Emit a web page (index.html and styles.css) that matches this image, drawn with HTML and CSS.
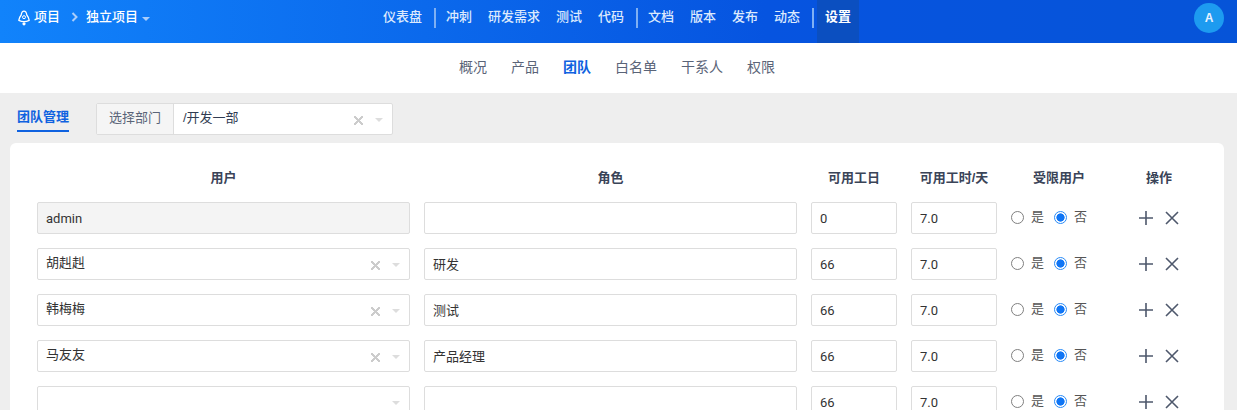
FILE: index.html
```html
<!DOCTYPE html>
<html lang="zh-CN">
<head>
<meta charset="utf-8">
<title>团队</title>
<link rel="stylesheet" href="styles.css">
</head>
<body>
<header class="topbar">
  <div class="crumbs">
    <svg class="logo" width="14" height="16" viewBox="0 0 14 16"><path d="M7 1.2C8.6 1.2 9.5 3 9.8 5 11 6.5 12 8 12.2 10.4 9 12 5 12 1.8 10.4 2 8 3 6.5 4.2 5 4.5 3 5.4 1.2 7 1.2Z" fill="none" stroke="#fff" stroke-width="1.3" stroke-linejoin="round"/><circle cx="7" cy="7.2" r="1.5" fill="none" stroke="#fff" stroke-width="1"/><circle cx="7" cy="13.8" r="1.6" fill="#fff"/></svg>
    <span class="crumb">项目</span>
    <svg class="chev" width="8" height="10" viewBox="0 0 8 10"><path d="M1.5 1 5.5 5 1.5 9" fill="none" stroke="#a9cdfb" stroke-width="2"/></svg>
    <span class="crumb">独立项目</span>
    <span class="caret"></span>
  </div>
  <nav class="mainnav">
    <a class="nav">仪表盘</a><i class="sep"></i>
    <a class="nav">冲刺</a><a class="nav">研发需求</a><a class="nav">测试</a><a class="nav">代码</a><i class="sep"></i>
    <a class="nav">文档</a><a class="nav">版本</a><a class="nav">发布</a><a class="nav">动态</a><i class="sep"></i>
    <a class="nav active">设置</a>
  </nav>
  <div class="avatar">A</div>
</header>
<nav class="subnav">
  <a>概况</a><a>产品</a><a class="on">团队</a><a>白名单</a><a>干系人</a><a>权限</a>
</nav>
<main class="content">
  <div class="toolbar">
    <div class="tab">团队管理</div>
    <div class="dept">
      <div class="addon">选择部门</div>
      <div class="dept-value"><span class="grow">/开发一部</span><span class="clear"></span><span class="arrow"></span></div>
    </div>
  </div>
  <section class="card">
    <div class="grid head">
      <div>用户</div><div>角色</div><div>可用工日</div><div>可用工时/天</div><div>受限用户</div><div>操作</div>
    </div>
    <div class="grid row">
      <div class="field disabled latin">admin</div>
      <div class="field"></div>
      <div class="field latin">0</div>
      <div class="field latin">7.0</div>
      <div class="radios"><span class="radio"></span><span class="rl">是</span><span class="radio checked"></span><span class="rl">否</span></div>
      <div class="ops"><svg width="16" height="16" viewBox="0 0 16 16"><path d="M8 1v14M1 8h14" class="op"/></svg><svg width="16" height="16" viewBox="0 0 16 16"><path d="M2 2l12 12M14 2 2 14" class="op"/></svg></div>
    </div>
    <div class="grid row">
      <div class="field sel"><span class="grow up">胡赳赳</span><span class="clear"></span><span class="arrow"></span></div>
      <div class="field low">研发</div>
      <div class="field latin">66</div>
      <div class="field latin">7.0</div>
      <div class="radios"><span class="radio"></span><span class="rl">是</span><span class="radio checked"></span><span class="rl">否</span></div>
      <div class="ops"><svg width="16" height="16" viewBox="0 0 16 16"><path d="M8 1v14M1 8h14" class="op"/></svg><svg width="16" height="16" viewBox="0 0 16 16"><path d="M2 2l12 12M14 2 2 14" class="op"/></svg></div>
    </div>
    <div class="grid row">
      <div class="field sel"><span class="grow up">韩梅梅</span><span class="clear"></span><span class="arrow"></span></div>
      <div class="field low">测试</div>
      <div class="field latin">66</div>
      <div class="field latin">7.0</div>
      <div class="radios"><span class="radio"></span><span class="rl">是</span><span class="radio checked"></span><span class="rl">否</span></div>
      <div class="ops"><svg width="16" height="16" viewBox="0 0 16 16"><path d="M8 1v14M1 8h14" class="op"/></svg><svg width="16" height="16" viewBox="0 0 16 16"><path d="M2 2l12 12M14 2 2 14" class="op"/></svg></div>
    </div>
    <div class="grid row">
      <div class="field sel"><span class="grow up">马友友</span><span class="clear"></span><span class="arrow"></span></div>
      <div class="field low">产品经理</div>
      <div class="field latin">66</div>
      <div class="field latin">7.0</div>
      <div class="radios"><span class="radio"></span><span class="rl">是</span><span class="radio checked"></span><span class="rl">否</span></div>
      <div class="ops"><svg width="16" height="16" viewBox="0 0 16 16"><path d="M8 1v14M1 8h14" class="op"/></svg><svg width="16" height="16" viewBox="0 0 16 16"><path d="M2 2l12 12M14 2 2 14" class="op"/></svg></div>
    </div>
    <div class="grid row">
      <div class="field sel"><span class="grow"></span><span class="arrow"></span></div>
      <div class="field"></div>
      <div class="field latin">66</div>
      <div class="field latin">7.0</div>
      <div class="radios"><span class="radio"></span><span class="rl">是</span><span class="radio checked"></span><span class="rl">否</span></div>
      <div class="ops"><svg width="16" height="16" viewBox="0 0 16 16"><path d="M8 1v14M1 8h14" class="op"/></svg><svg width="16" height="16" viewBox="0 0 16 16"><path d="M2 2l12 12M14 2 2 14" class="op"/></svg></div>
    </div>
  </section>
</main>
</body>
</html>
```
FILE: styles.css
```css
* { box-sizing: border-box; }
html, body { margin: 0; height: 410px; overflow: hidden; }
body {
  background: #eee;
  color: #313c52;
  font-family: "Liberation Sans", "Noto Sans CJK SC", sans-serif;
  font-size: 13px;
  line-height: 20px;
}
.topbar {
  height: 43px;
  display: grid;
  grid-template-columns: 1fr auto 1fr;
  align-items: center;
  padding: 0 13px 0 18px;
  background: linear-gradient(90deg, #1183fb, #0654e0 62%, #0654d8);
  color: #fff;
}
.crumbs { display: flex; align-items: center; margin-bottom: 9px; margin-left: -1px; }
.logo { margin-right: 3px; margin-top: 1px; }
.crumb { font-weight: 500; }
.chev { margin: 0 7px 0 11px; }
.caret {
  margin: 3px 0 0 4px;
  border: 4px solid transparent;
  border-top: 4px solid #a9cdfb;
  border-bottom: 0;
  width: 0;
}
.mainnav { display: flex; align-items: stretch; height: 43px; }
.nav {
  display: flex;
  align-items: center;
  padding-bottom: 9px;
  margin-right: 16px;
  color: #dce9fd;
  font-weight: 500;
}
.nav + .sep { margin-left: -4px; }
.sep {
  width: 2px;
  height: 20px;
  align-self: flex-start;
  margin: 8px 10px 0 0;
  background: #7fb0f3;
}
.nav.active {
  margin: 0 0 0 -7px;
  padding: 0 8px 9px;
  color: #fff;
  font-weight: 700;
  background: #0b4fc0;
}
.avatar {
  justify-self: end;
  width: 30px;
  height: 30px;
  margin-bottom: 8px;
  border-radius: 50%;
  background: #1d9bf0;
  color: #e8f2ff;
  font: 700 12px/30px "Liberation Sans", sans-serif;
  text-align: center;
}
.subnav {
  height: 50px;
  padding: 0 3px 3px 0;
  background: #fff;
  display: flex;
  justify-content: center;
  align-items: center;
  gap: 24px;
  font-size: 14px;
  color: #5a6478;
}
.subnav .on { color: #0f62e0; font-weight: 700; }
.content { padding: 0 13px 0 10px; height: 317px; overflow: hidden; }
.toolbar {
  height: 50px;
  display: flex;
  align-items: flex-start;
  padding: 10px 0 0 7px;
}
.tab {
  width: 52px;
  height: 29px;
  padding-top: 4px;
  white-space: nowrap;
  color: #0f62e0;
  font-weight: 700;
  border-bottom: 2px solid #0f62e0;
  margin-right: 27px;
}
.dept {
  width: 297px;
  height: 32px;
  display: flex;
  border: 1px solid #ddd;
  border-radius: 2px;
  background: #fff;
}
.addon {
  width: 77px;
  padding-left: 12px;
  line-height: 28px;
  background: #f5f5f5;
  border-right: 1px solid #ddd;
  color: #5a6478;
}
.dept-value {
  flex: 1;
  display: flex;
  align-items: center;
  padding: 0 9px;
}
.dept-value .grow { margin-top: -2px; }
.grow { flex: 1; }
.clear {
  width: 9px;
  height: 9px;
  margin: 2px 12px 0 0;
  background:
    linear-gradient(45deg, transparent 44%, #ccc 44%, #ccc 56%, transparent 56%),
    linear-gradient(-45deg, transparent 44%, #ccc 44%, #ccc 56%, transparent 56%);
}
.arrow {
  width: 0;
  margin-top: 1px;
  border: 4px solid transparent;
  border-top: 4px solid #ddd;
  border-bottom: 0;
}
.card {
  background: #fff;
  border-radius: 6px;
  padding: 0 0 0 27px;
  height: 300px;
}
.grid {
  display: grid;
  grid-template-columns: 373px 373px 86px 86px 96px 76px;
  column-gap: 14px;
}
.head {
  height: 59px;
  padding-top: 25px;
  text-align: center;
  font-weight: 700;
  color: #3a4458;
}
.row { height: 32px; margin-bottom: 14px; align-items: center; }
.field {
  height: 32px;
  border: 1px solid #ddd;
  border-radius: 2px;
  padding: 0 8px;
  line-height: 32px;
  background: #fff;
  color: #333;
}
.latin { font-family: Roboto, "Noto Sans", sans-serif; font-size: 13px; }
.disabled { background: #f4f4f4; color: #333; }
.sel { display: flex; align-items: center; line-height: 30px; padding-right: 9px; }
.up { margin-top: -3px; }
.low { line-height: 32px; }
.radios { display: flex; align-items: center; color: #555; margin-top: -2px; }
.radio {
  width: 13px;
  height: 13px;
  border: 1px solid #808080;
  border-radius: 50%;
  background: #fff;
}
.radio.checked {
  border-color: #2a8bf7;
  background: radial-gradient(circle, #0f75f5 0 3.8px, #fff 4.4px);
}
.rl { margin: -1px 10px 0 7px; }
.ops { display: flex; align-items: center; gap: 10px; padding-left: 17px; }
.op { fill: none; stroke: #4e586c; stroke-width: 1.6; }
```
